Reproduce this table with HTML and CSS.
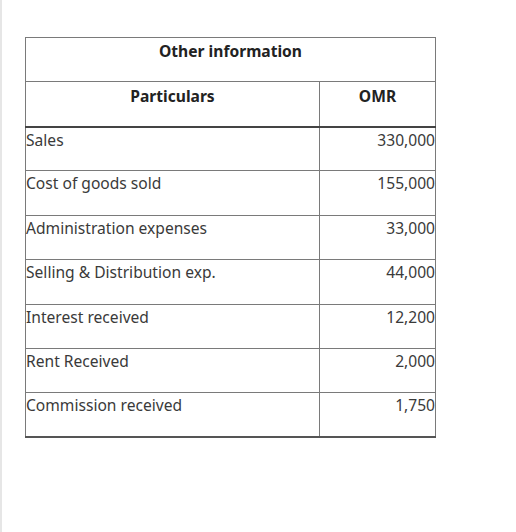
FILE: index.html
```html
<!DOCTYPE html>
<html>
<head>
<meta charset="utf-8">
<link rel="stylesheet" href="styles.css">
</head>
<body>
<div class="page">
  <table class="info">
    <colgroup><col class="c1"><col class="c2"></colgroup>
    <thead>
      <tr class="title"><th colspan="2">Other information</th></tr>
      <tr class="head"><th>Particulars</th><th>OMR</th></tr>
    </thead>
    <tbody>
      <tr><td>Sales</td><td class="num">330,000</td></tr>
      <tr><td>Cost of goods sold</td><td class="num">155,000</td></tr>
      <tr><td>Administration expenses</td><td class="num">33,000</td></tr>
      <tr><td>Selling &amp; Distribution exp.</td><td class="num">44,000</td></tr>
      <tr><td>Interest received</td><td class="num">12,200</td></tr>
      <tr><td>Rent Received</td><td class="num">2,000</td></tr>
      <tr><td>Commission received</td><td class="num">1,750</td></tr>
    </tbody>
  </table>
</div>
</body>
</html>
```
FILE: styles.css
```css
html, body {
  margin: 0;
  padding: 0;
  background: #fff;
}
.page {
  min-height: 532px;
  box-sizing: border-box;
  border-left: 2px solid #e6e6e6;
  padding: 37px 0 0 23px;
  font-family: "Noto Sans", "Open Sans", sans-serif;
  color: #3a3a3a;
}
.info {
  border-collapse: collapse;
  width: 410px;
  table-layout: fixed;
  font-size: 15.6px;
}
.c1 { width: 294px; }
.c2 { width: 116px; }
.info th, .info td {
  border: 1px solid #7a7a7a;
  padding: 0;
  vertical-align: top;
  line-height: 22px;
}
.info th {
  font-weight: 700;
  color: #222;
  text-align: center;
}
.title th {
  height: 44px;
  padding-top: 2px;
  box-sizing: border-box;
}
.head th {
  height: 45px;
  padding-top: 3px;
  box-sizing: border-box;
  border-bottom: 2px solid #444;
}
.info td {
  height: 44.4px;
  box-sizing: border-box;
  padding-top: 1px;
}
.info tbody tr:last-child td {
  border-bottom: 2px solid #555;
}
.num { text-align: right; }
```
